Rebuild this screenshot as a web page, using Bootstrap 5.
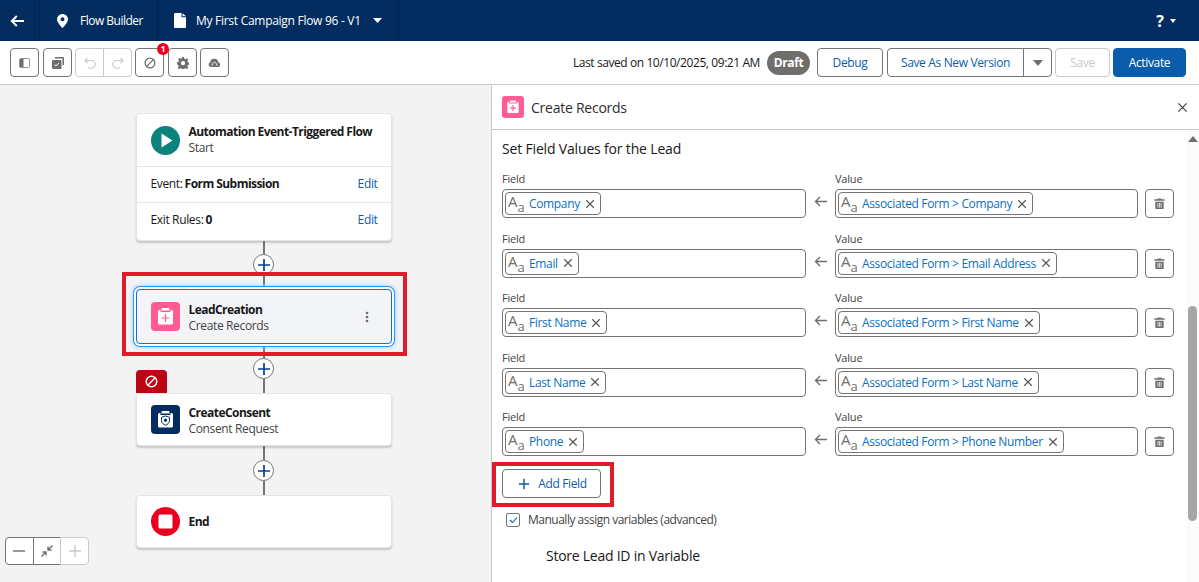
<!DOCTYPE html>
<html lang="en">
<head>
  <meta charset="UTF-8">
  <title>Flow Builder</title>
  <link href="https://cdn.jsdelivr.net/npm/bootstrap@5.3.3/dist/css/bootstrap.min.css" rel="stylesheet">
  <style>
    html, body { height: 582px; overflow: hidden; }
    body { font-family: "Open Sans", "Liberation Sans", sans-serif; font-size: 12px; letter-spacing: -.35px; color: #181818; }
    svg { display: block; flex: none; }
    b { letter-spacing: -.55px; }

    /* top bar */
    .top-bar { height: 41px; background: #032d60; color: #fff; }
    .top-cell { height: 41px; border-right: 1px solid #01234c; }
    .top-back { width: 40px; padding-right: 6px; }
    .top-app { width: 118px; padding-left: 17px; gap: 12px; letter-spacing: -.5px; }
    .top-title { width: 241px; padding-left: 16px; gap: 10px; letter-spacing: -.28px; }
    .title-caret { margin-left: 2px; }
    .top-help { margin-right: 23px; gap: 6px; }
    .help-mark { font-size: 16px; font-weight: 700; letter-spacing: 0; }

    /* toolbar */
    .tool-bar { height: 44px; padding: 7px 13px 0 10px; border-bottom: 1px solid #c9c9c9; background: #fff; }
    .tool-btn { --bs-btn-padding-x: 0; --bs-btn-padding-y: 0; --bs-btn-border-color: #747474; --bs-btn-border-radius: 4px; --bs-btn-font-size: 12px; --bs-btn-color: #0b5cab; --bs-btn-bg: #fff; letter-spacing: -.35px; height: 29px; display: inline-flex; align-items: center; justify-content: center; }
    .tool-btn.square { width: 29px; }
    .tool-btn.off { --bs-btn-disabled-border-color: #c9c9c9; --bs-btn-disabled-color: #c9c9c9; --bs-btn-disabled-bg: #fff; --bs-btn-disabled-opacity: 1; }
    .tool-btn.go { --bs-btn-bg: #0b5cab; --bs-btn-border-color: #0b5cab; --bs-btn-color: #fff; width: 73px; }
    .gap-r3 { margin-right: 3px; }
    .gap-r4 { margin-right: 4px; }
    .err-count { position: absolute; top: -6px; right: -6px; width: 12px; height: 12px; border-radius: 50%; background: #ea001e; color: #fff; font-size: 9px; font-weight: 700; line-height: 12px; text-align: center; letter-spacing: 0; }
    .saved-text { line-height: 29px; letter-spacing: -.42px; }
    .draft-pill { width: 43px; height: 24px; border-radius: 12px; background: #706e6b; color: #fff; font-weight: 700; line-height: 24px; text-align: center; margin: 3px 7px 0 7px; }
    .btn-debug { width: 66px; }
    .btn-newver { width: 137px; }
    .btn-more { width: 29px; }
    .btn-save { width: 55px; }

    /* canvas */
    .flow-canvas { width: 491px; background: #f3f3f3; padding: 28px 0 0 135.5px; }
    .flow-col { width: 256px; }
    .flow-node { width: 256px; background: #fff; border: 1px solid #e5e5e5; border-radius: 4px; box-shadow: 0 2px 2px rgba(0,0,0,.18); }
    .node-head { padding: 0 14px; gap: 9px; height: 51px; }
    .node-start .node-head { height: 52px; }
    .node-text { padding-top: 2px; }
    .node-start .node-text { padding-top: 0; padding-bottom: 1px; }
    .node-name { font-weight: 700; line-height: 17px; color: #181818; letter-spacing: -.55px; white-space: nowrap; }
    .node-sub { line-height: 16px; color: #444; }
    .node-line { height: 36px; border-top: 1px solid #e5e5e5; padding: 0 13px 2px 14px; }
    .node-line b { margin-left: 2px; }
    .node-line a { color: #0b5cab; text-decoration: none; }
    .node-rest { height: 2px; }
    .node-pick { background: #f3f4f8; border: 1px solid #0176d3; box-shadow: 0 0 0 2px #fff, 0 0 0 3px #1b96ff, 0 0 5px 3px #9fd0f5; }
    .node-pick .node-head { height: 53px; }
    .link-seg { width: 2px; height: 14px; background: #747474; }
    .link-seg.short { height: 13px; }
    .add-step { width: 21px; height: 21px; border: 1px solid #747474; border-radius: 50%; background: #fff; display: flex; align-items: center; justify-content: center; color: #014486; }
    .warn-tab { position: absolute; left: -1px; top: -24px; width: 31px; height: 23px; background: #ba0517; border-radius: 4px 4px 0 0; display: flex; align-items: center; justify-content: center; color: #fff; }
    .red-frame { position: absolute; border: 4px solid #e21b2b; pointer-events: none; }
    .frame-node { left: -15px; right: -16px; top: -18px; bottom: -13px; }
    .frame-add { left: -10px; right: -13px; top: -7px; bottom: -9px; }
    .zoom-tools { position: absolute; left: 5px; bottom: 17px; }
    .zoom-tools .btn { width: 28.7px; height: 28px; padding: 0; display: inline-flex; align-items: center; justify-content: center; --bs-btn-bg: #fff; --bs-btn-border-color: #747474; --bs-btn-border-radius: 4px; --bs-btn-disabled-bg: #fff; --bs-btn-disabled-border-color: #c9c9c9; --bs-btn-disabled-opacity: 1; }
    .ink-gray { color: #706e6b; }

    /* side panel */
    .side-panel { border-left: 1px solid #c9c9c9; background: #fff; min-width: 0; }
    .side-head { height: 45px; padding: 0 11px 0 10px; border-bottom: 1px solid #c9c9c9; gap: 7px; font-size: 14px; color: #2e2e2e; letter-spacing: -.25px; }
    .side-close { color: #444; }
    .side-body { padding: 9px 0 0 10px; }
    .sec-title { font-size: 14px; line-height: 19px; color: #181818; letter-spacing: -.17px; margin-bottom: 13px; }
    .map-rows { gap: 12.5px; }
    .map-col { width: 304px; }
    .map-col.right { width: 303px; }
    .map-label { display: block; font-size: 11px; line-height: 16px; color: #444; margin-bottom: 2px; letter-spacing: -.2px; }
    .map-box { height: 29px; border: 1px solid #747474; border-radius: 4px; padding: 2px; display: flex; align-items: center; }
    .chip { height: 23px; border: 1px solid #747474; border-radius: 4px; display: inline-flex; align-items: center; padding: 0 5px 0 2px; color: #0b6fc2; line-height: 21px; }
    .chip-type { width: 21px; color: #706e6b; font-size: 15px; line-height: 16px; letter-spacing: 0; display: inline-flex; align-items: baseline; position: relative; top: -2px; }
    .chip-type i { font-style: normal; font-size: 13px; position: relative; top: 5px; }
    .chip-x { margin-left: 5px; color: #555; }
    .map-arrow { width: 29px; padding-top: 25px; }
    .map-del { margin: 18px 0 0 7px; }
    .add-wrap { margin-top: 13px; }
    .add-btn { width: 99px; gap: 8px; padding-left: 2px; }
    .check-line { margin: 13px 0 0 4px; color: #444; gap: 8px; height: 17px; letter-spacing: -.5px; }
    .tick-box { width: 14px; height: 14px; border: 1px solid #747474; border-radius: 2px; display: flex; align-items: center; justify-content: center; }
    .store-var { font-size: 14px; margin: 18px 0 0 44px; line-height: 19px; color: #181818; letter-spacing: -.25px; }
    .side-scroll { position: absolute; right: 0; top: 45px; bottom: 0; width: 12px; background: #fbfbfb; }
    .scroll-up { position: absolute; left: 0; top: 6px; width: 0; height: 0; border: 5px solid transparent; border-top: 0; border-bottom: 6px solid #6f6f6f; margin-left: 1px; }
    .scroll-thumb { position: absolute; left: 1px; top: 176px; width: 9px; height: 215px; border-radius: 5px; background: #a6a6a6; }
  </style>
</head>
<body class="d-flex flex-column">

  <!-- shared icons -->
  <svg width="0" height="0" class="position-absolute">
    <symbol id="ic-x" viewBox="0 0 12 12"><path d="M1.500 1.500l9 9M10.500 1.500l-9 9" fill="none" stroke="currentColor" stroke-width="1.400"/></symbol>
    <symbol id="ic-plus" viewBox="0 0 14 14"><path d="M7 1v12M1 7h12" fill="none" stroke="currentColor" stroke-width="1.700"/></symbol>
    <symbol id="ic-ban" viewBox="0 0 16 16"><circle cx="8" cy="8" r="6.500" fill="none" stroke="currentColor" stroke-width="1.700"/><path d="M3.500 12.500l9-9" stroke="currentColor" stroke-width="1.700"/></symbol>
    <symbol id="ic-form" viewBox="0 0 24 24"><path d="M9 3.500h6a1 1 0 0 1 1 1V6H8V4.500a1 1 0 0 1 1-1z" fill="#fff"/><path d="M6 5.500h1V7.500h10V5.500h1a1.500 1.500 0 0 1 1.500 1.500v11.500A1.500 1.500 0 0 1 18 20H6a1.500 1.500 0 0 1-1.500-1.500V7A1.500 1.500 0 0 1 6 5.500z" fill="#fff"/></symbol>
    <symbol id="ic-trash" viewBox="0 0 14 14"><path d="M5 1.500h4v1h3.500v1.500h-11V2.500H5zM2.500 5h9v7a1 1 0 0 1-1 1h-7a1 1 0 0 1-1-1z" fill="currentColor"/><path d="M5.300 6.500v5M7 6.500v5M8.700 6.500v5" stroke="#fff" stroke-width=".8"/></symbol>
  </svg>

  <div class="top-bar d-flex align-items-center flex-shrink-0">
    <div class="top-cell top-back d-flex align-items-center justify-content-center">
      <svg width="14" height="12" viewBox="0 0 14 12"><path d="M14 6H2M6.800 1L1.800 6l5 5" fill="none" stroke="#fff" stroke-width="1.900"/></svg>
    </div>
    <div class="top-cell top-app d-flex align-items-center">
      <svg width="11" height="14" viewBox="0 0 11 14"><path fill-rule="evenodd" d="M5.500 0A5.300 5.300 0 0 1 11 5.200C11 8.800 5.500 14 5.500 14S0 8.800 0 5.200A5.300 5.300 0 0 1 5.500 0zm0 3.300a2 2 0 1 0 0 4 2 2 0 0 0 0-4z" fill="#fff"/></svg>
      <span>Flow Builder</span>
    </div>
    <div class="top-cell top-title d-flex align-items-center">
      <svg width="12" height="15" viewBox="0 0 12 15"><path d="M1 0h6.500v4.200H12V14a1 1 0 0 1-1 1H1a1 1 0 0 1-1-1V1a1 1 0 0 1 1-1zM8.500.2L12 3.300H8.500z" fill="#fff"/></svg>
      <span>My First Campaign Flow 96 - V1</span>
      <svg class="title-caret" width="9" height="5" viewBox="0 0 9 5"><path d="M0 0h9L4.500 5z" fill="#fff"/></svg>
    </div>
    <div class="top-help ms-auto d-flex align-items-center">
      <span class="help-mark">?</span>
      <svg width="6" height="4" viewBox="0 0 6 4"><path d="M0 0h6L3 4z" fill="#fff"/></svg>
    </div>
  </div>

  <div class="tool-bar d-flex align-items-start flex-shrink-0">
    <button class="btn tool-btn square gap-r4">
      <svg width="11" height="10" viewBox="0 0 11 10"><rect x=".5" y=".5" width="10" height="9" rx="1" fill="none" stroke="#939393"/><rect x="1" y="1" width="3.500" height="8" fill="#706e6b"/></svg>
    </button>
    <button class="btn tool-btn square gap-r3">
      <svg width="12" height="12" viewBox="0 0 12 12"><path d="M3 0h8a1 1 0 0 1 1 1v7h-1.500V1.500H3z" fill="#706e6b"/><rect y="3" width="9.500" height="9" rx="1" fill="#706e6b"/><path d="M2.500 7.500l1.500 1.500 3-3" fill="none" stroke="#fff" stroke-width="1"/></svg>
    </button>
    <div class="btn-group gap-r3">
      <button class="btn tool-btn square off" disabled>
        <svg width="12" height="12" viewBox="0 0 12 12"><path d="M3.500 1L1 3.500 3.500 6M1 3.500h6.500a3.700 3.700 0 0 1 0 7.500H4" fill="none" stroke="currentColor" stroke-width="1.200"/></svg>
      </button>
      <button class="btn tool-btn square off" disabled>
        <svg width="12" height="12" viewBox="0 0 12 12"><path d="M8.500 1L11 3.500 8.500 6M11 3.500H4.500a3.700 3.700 0 0 0 0 7.500H8" fill="none" stroke="currentColor" stroke-width="1.200"/></svg>
      </button>
    </div>
    <button class="btn tool-btn square gap-r4 position-relative">
      <svg width="12" height="12" class="ink-gray"><use href="#ic-ban"/></svg>
      <span class="err-count">1</span>
    </button>
    <button class="btn tool-btn square gap-r3">
      <svg width="12" height="12" viewBox="0 0 14 14"><path fill-rule="evenodd" d="M5.800 0h2.400l.4 2 1.400.6 1.700-1.100 1.500 1.700-1.100 1.600.5 1.300 1.900.5v2.400l-1.900.4-.5 1.400 1.100 1.600-1.500 1.600-1.700-1-1.400.5-.4 1.900H5.800l-.4-1.900-1.400-.5-1.700 1-1.500-1.600 1.100-1.600-.5-1.400L0 8.400V6l1.900-.4.500-1.300-1.100-1.600 1.500-1.700 1.700 1.100 1.400-.6zM7 4.700a2.500 2.500 0 1 0 0 5 2.500 2.500 0 0 0 0-5z" fill="#706e6b"/></svg>
    </button>
    <button class="btn tool-btn square">
      <svg width="13" height="11" viewBox="0 0 14 12"><path d="M3 11a2.700 2.700 0 0 1-.5-5.300A3.500 3.500 0 0 1 7 2a3.500 3.500 0 0 1 4 3.700A2.700 2.700 0 0 1 11 11z" fill="#706e6b"/><path d="M4.500 9.500V7.500L7 5.500l2.500 2v2" fill="none" stroke="#fff" stroke-width="1"/></svg>
    </button>

    <span class="saved-text ms-auto">Last saved on 10/10/2025, 09:21 AM</span>
    <span class="draft-pill">Draft</span>
    <button class="btn tool-btn btn-debug gap-r4">Debug</button>
    <div class="btn-group gap-r3">
      <button class="btn tool-btn btn-newver">Save As New Version</button>
      <button class="btn tool-btn btn-more">
        <svg width="10" height="6" viewBox="0 0 10 6"><path d="M0 0h10L5 6z" fill="#706e6b"/></svg>
      </button>
    </div>
    <button class="btn tool-btn off btn-save gap-r3" disabled>Save</button>
    <button class="btn tool-btn go">Activate</button>
  </div>

  <div class="d-flex flex-grow-1 overflow-hidden">
    <div class="flow-canvas position-relative flex-shrink-0">
      <div class="flow-col d-flex flex-column align-items-center">
        <div class="flow-node node-start">
          <div class="node-head d-flex align-items-center">
            <svg width="29" height="29" viewBox="0 0 29 29"><circle cx="14.500" cy="14.500" r="14.500" fill="#0b827c"/><path d="M10.500 7.500l11 7-11 7z" fill="#fff"/></svg>
            <div class="node-text">
              <div class="node-name">Automation Event-Triggered Flow</div>
              <div class="node-sub">Start</div>
            </div>
          </div>
          <div class="node-line d-flex align-items-center justify-content-between">
            <span>Event:<b>Form Submission</b></span><a href="#">Edit</a>
          </div>
          <div class="node-line d-flex align-items-center justify-content-between">
            <span>Exit Rules:<b>0</b></span><a href="#">Edit</a>
          </div>
          <div class="node-rest"></div>
        </div>

        <div class="link-seg short"></div>
        <div class="add-step"><svg width="14" height="14"><use href="#ic-plus"/></svg></div>
        <div class="link-seg"></div>

        <div class="flow-node node-pick position-relative">
          <div class="node-head d-flex align-items-center">
            <svg width="29" height="29" viewBox="0 0 29 29"><rect width="29" height="29" rx="4" fill="#fe5c92"/><svg x="2.500" y="2.500" width="24" height="24"><use href="#ic-form"/></svg><path d="M14.500 12v8M10.500 16h8" stroke="#fe5c92" stroke-width="1.200"/></svg>
            <div class="node-text flex-grow-1">
              <div class="node-name">LeadCreation</div>
              <div class="node-sub">Create Records</div>
            </div>
            <svg class="me-2" width="4" height="12" viewBox="0 0 4 12"><circle cx="2" cy="2" r="1.300" fill="#706e6b"/><circle cx="2" cy="6" r="1.300" fill="#706e6b"/><circle cx="2" cy="10" r="1.300" fill="#706e6b"/></svg>
          </div>
          <div class="red-frame frame-node"></div>
        </div>

        <div class="link-seg"></div>
        <div class="add-step"><svg width="14" height="14"><use href="#ic-plus"/></svg></div>
        <div class="link-seg"></div>

        <div class="flow-node position-relative">
          <div class="warn-tab"><svg width="13" height="13"><use href="#ic-ban"/></svg></div>
          <div class="node-head d-flex align-items-center">
            <svg width="29" height="29" viewBox="0 0 29 29"><rect width="29" height="29" rx="4" fill="#032d60"/><svg x="2.500" y="2.500" width="24" height="24"><use href="#ic-form"/></svg><path d="M14.500 11l4 1.300v3.200c0 2.500-2 4-4 4.700-2-.7-4-2.200-4-4.700v-3.200z" fill="#fff" stroke="#032d60" stroke-width="1"/><circle cx="14.500" cy="15.200" r="1.600" fill="#032d60"/></svg>
            <div class="node-text">
              <div class="node-name">CreateConsent</div>
              <div class="node-sub">Consent Request</div>
            </div>
          </div>
        </div>

        <div class="link-seg"></div>
        <div class="add-step"><svg width="14" height="14"><use href="#ic-plus"/></svg></div>
        <div class="link-seg"></div>

        <div class="flow-node">
          <div class="node-head d-flex align-items-center">
            <svg width="29" height="29" viewBox="0 0 29 29"><circle cx="14.500" cy="14.500" r="14.500" fill="#ea001e"/><rect x="7.500" y="7.500" width="14" height="14" rx="1.500" fill="#fff"/></svg>
            <div class="node-name">End</div>
          </div>
        </div>
      </div>

      <div class="zoom-tools btn-group">
        <button class="btn"><svg width="12" height="2" viewBox="0 0 12 2"><path d="M0 1h12" stroke="#706e6b" stroke-width="1.400"/></svg></button>
        <button class="btn"><svg width="12" height="12" viewBox="0 0 12 12"><path d="M11.500.5L7.800 4.200M7 1.500V5h3.500M.5 11.500l3.700-3.700M1.500 7H5v3.500" fill="none" stroke="#706e6b" stroke-width="1.400"/></svg></button>
        <button class="btn" disabled><svg width="12" height="12" viewBox="0 0 12 12"><path d="M6 0v12M0 6h12" stroke="#c9c9c9" stroke-width="1.400"/></svg></button>
      </div>
    </div>

    <div class="side-panel position-relative flex-grow-1 overflow-hidden">
      <div class="side-head d-flex align-items-center">
        <svg width="22" height="22" viewBox="0 0 29 29"><rect width="29" height="29" rx="4" fill="#fe5c92"/><svg x="2.500" y="2.500" width="24" height="24"><use href="#ic-form"/></svg><path d="M14.500 12v8M10.500 16h8" stroke="#fe5c92" stroke-width="1.400"/></svg>
        <span>Create Records</span>
        <svg class="side-close ms-auto" width="11" height="11"><use href="#ic-x"/></svg>
      </div>
      <div class="side-body">
        <div class="sec-title">Set Field Values for the Lead</div>
        <div class="map-rows d-flex flex-column" id="mapRows"></div>
        <div class="add-wrap position-relative d-inline-block">
          <button class="btn tool-btn add-btn"><svg width="12" height="12"><use href="#ic-plus"/></svg>Add Field</button>
          <div class="red-frame frame-add"></div>
        </div>
        <div class="check-line d-flex align-items-center">
          <span class="tick-box"><svg width="9" height="8" viewBox="0 0 9 8"><path d="M1 4l2.500 2.500L8 1.500" fill="none" stroke="#0b5cab" stroke-width="1.100"/></svg></span>
          <span>Manually assign variables (advanced)</span>
        </div>
        <div class="store-var">Store Lead ID in Variable</div>
      </div>
      <div class="side-scroll"><span class="scroll-up"></span><span class="scroll-thumb"></span></div>
    </div>
  </div>

  <script src="https://cdn.jsdelivr.net/npm/bootstrap@5.3.3/dist/js/bootstrap.bundle.min.js"></script>
  <script>
    const rows = [
      ["Company", "Associated Form > Company"],
      ["Email", "Associated Form > Email Address"],
      ["First Name", "Associated Form > First Name"],
      ["Last Name", "Associated Form > Last Name"],
      ["Phone", "Associated Form > Phone Number"]
    ];

    function chip(text) {
      return `<span class="chip"><span class="chip-type">A<i>a</i></span>${text.replace(">", "&gt;")}<svg class="chip-x" width="10" height="10"><use href="#ic-x"/></svg></span>`;
    }

    document.getElementById("mapRows").innerHTML = rows.map(r => `
      <div class="map-row d-flex align-items-start">
        <div class="map-col"><label class="map-label">Field</label><div class="map-box">${chip(r[0])}</div></div>
        <div class="map-arrow d-flex justify-content-center">
          <svg width="13" height="11" viewBox="0 0 13 11"><path d="M13 5.500H1.500M6 1L1.500 5.500 6 10" fill="none" stroke="#706e6b" stroke-width="1.400"/></svg>
        </div>
        <div class="map-col right"><label class="map-label">Value</label><div class="map-box">${chip(r[1])}</div></div>
        <button class="btn tool-btn square map-del"><svg class="ink-gray" width="13" height="13"><use href="#ic-trash"/></svg></button>
      </div>`).join("");
  </script>
</body>
</html>
